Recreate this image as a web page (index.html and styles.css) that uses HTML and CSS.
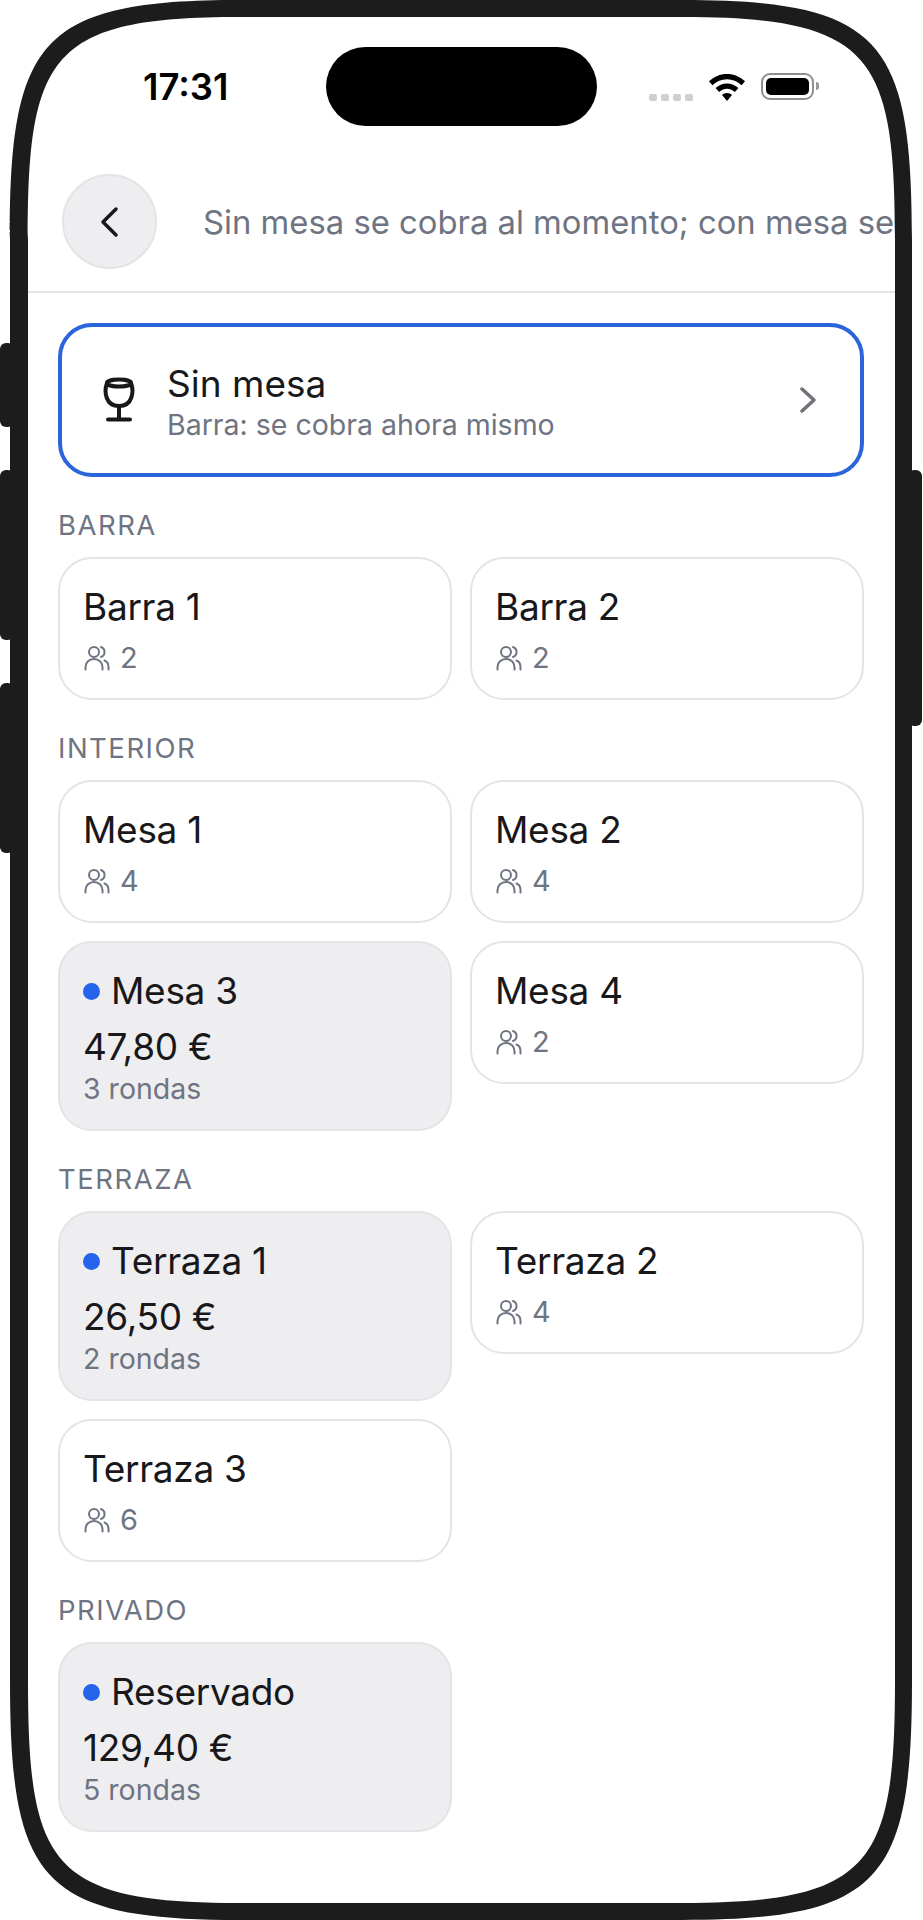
FILE: index.html
```html
<!DOCTYPE html>
<html lang="es">
<head>
    <meta charset="UTF-8">
    <meta name="viewport" content="width=device-width, initial-scale=1.0">
    <title>Mesas</title>
    <link rel="stylesheet" href="styles.css">
</head>
<body>
    <!-- Shared people icon -->
    <svg class="defs" width="0" height="0">
        <symbol id="people" viewBox="0 0 26 26">
            <circle cx="10" cy="7" r="5"/>
            <path d="M1.500 24.500v-2.500a8.500 8 0 0 1 17 0v2.500"/>
            <path d="M17 2a5.300 5.300 0 0 1 0 10"/>
            <path d="M20.500 15.500c2.500 1 4 3.500 4 6.500v2.500"/>
        </symbol>
    </svg>

    <div class="phone">
        <div class="screen">
            <!-- Status bar -->
            <div class="status">
                <span class="time">17:31</span>
                <div class="island"></div>
                <div class="dots"><i></i><i></i><i></i><i></i></div>
                <svg class="wifi" viewBox="0 0 36 27">
                    <path d="M18 0C11 0 5 2.700 0 7.300l3.400 4C7.500 7.500 12.500 5.300 18 5.300s10.500 2.200 14.600 6l3.400-4C31 2.700 25 0 18 0Z"/>
                    <path d="M18 9.500c-4.400 0-8.300 1.700-11.400 4.600l3.500 4c2.100-2 4.800-3.300 7.900-3.300s5.800 1.300 7.900 3.300l3.500-4C26.300 11.200 22.400 9.500 18 9.500Z"/>
                    <path d="M18 19c-2 0-3.800.8-5 2l5 6 5-6c-1.200-1.200-3-2-5-2Z"/>
                </svg>
                <div class="battery"><div class="battery-fill"></div></div>
                <div class="battery-nub"></div>
            </div>

            <!-- Header -->
            <header class="topbar">
                <button class="back">
                    <svg viewBox="0 0 24 32" width="24" height="32"><path d="M18 3 5 16l13 13"/></svg>
                </button>
                <p class="hint">Sin mesa se cobra al momento; con mesa se</p>
            </header>

            <main class="content">
                <div class="no-table">
                    <svg class="glass" viewBox="0 0 32 46">
                        <ellipse cx="16" cy="6" rx="12" ry="3.500"/>
                        <path d="M4 6C1 14 2 29 16 29S31 14 28 6"/>
                        <path d="M16 29v13M5 42.500h22"/>
                    </svg>
                    <div class="no-table-text">
                        <div class="no-table-title">Sin mesa</div>
                        <div class="no-table-sub">Barra: se cobra ahora mismo</div>
                    </div>
                    <svg class="arrow" viewBox="0 0 16 26" width="16" height="26"><path d="M2 2l12 11L2 24"/></svg>
                </div>

                <h2 class="zone">BARRA</h2>
                <div class="tables">
                    <div class="table">
                        <div class="table-name">Barra 1</div>
                        <div class="seats"><svg><use href="#people"/></svg>2</div>
                    </div>
                    <div class="table">
                        <div class="table-name">Barra 2</div>
                        <div class="seats"><svg><use href="#people"/></svg>2</div>
                    </div>
                </div>

                <h2 class="zone">INTERIOR</h2>
                <div class="tables">
                    <div class="table">
                        <div class="table-name">Mesa 1</div>
                        <div class="seats"><svg><use href="#people"/></svg>4</div>
                    </div>
                    <div class="table">
                        <div class="table-name">Mesa 2</div>
                        <div class="seats"><svg><use href="#people"/></svg>4</div>
                    </div>
                    <div class="table open">
                        <div class="table-name"><span class="dot"></span>Mesa 3</div>
                        <div class="amount">47,80 €</div>
                        <div class="rounds">3 rondas</div>
                    </div>
                    <div class="table">
                        <div class="table-name">Mesa 4</div>
                        <div class="seats"><svg><use href="#people"/></svg>2</div>
                    </div>
                </div>

                <h2 class="zone">TERRAZA</h2>
                <div class="tables">
                    <div class="table open">
                        <div class="table-name"><span class="dot"></span>Terraza 1</div>
                        <div class="amount">26,50 €</div>
                        <div class="rounds">2 rondas</div>
                    </div>
                    <div class="table">
                        <div class="table-name">Terraza 2</div>
                        <div class="seats"><svg><use href="#people"/></svg>4</div>
                    </div>
                    <div class="table">
                        <div class="table-name">Terraza 3</div>
                        <div class="seats"><svg><use href="#people"/></svg>6</div>
                    </div>
                </div>

                <h2 class="zone">PRIVADO</h2>
                <div class="tables">
                    <div class="table open">
                        <div class="table-name"><span class="dot"></span>Reservado</div>
                        <div class="amount">129,40 €</div>
                        <div class="rounds">5 rondas</div>
                    </div>
                </div>
            </main>
        </div>

        <!-- Device frame, drawn over the screen -->
        <svg class="frame" viewBox="0 0 923 1920" width="923" height="1920">
            <path fill-rule="evenodd" d="M10 240C10 40 40 0 240 0H682C882 0 912 40 912 240V1680C912 1880 882 1920 682 1920H240C40 1920 10 1880 10 1680Z
                M28 240V1680C28 1865 50 1903 240 1903H682C872 1903 895 1865 895 1680V240C895 55 872 17 682 17H240C50 17 28 55 28 240Z"/>
            <rect x="0" y="343" width="14" height="84" rx="6"/>
            <rect x="0" y="470" width="14" height="170" rx="6"/>
            <rect x="0" y="683" width="14" height="170" rx="6"/>
            <rect x="908" y="470" width="14" height="256" rx="6"/>
        </svg>
    </div>
</body>
</html>
```

FILE: styles.css
```css
/* Basic reset */
* {
    margin: 0;
    padding: 0;
    box-sizing: border-box;
}

body {
    width: 923px;
    height: 1920px;
    background-color: #fff;
    font-family: Inter, "Noto Sans", sans-serif;
    color: #18181b;
    overflow: hidden;
}

.defs {
    position: absolute;
}

/* Device */
.phone {
    position: relative;
    width: 923px;
    height: 1920px;
    padding: 17px 28px;
}

.frame {
    position: absolute;
    top: 0;
    left: 0;
    fill: #1c1c1c;
}

.screen {
    width: 867px;
    height: 1886px;
    overflow: hidden;
}

/* Status bar */
.status {
    height: 140px;
    padding-top: 30px;
    display: flex;
    align-items: flex-start;
}

.time {
    width: 298px;
    padding: 19px 0 0 115px;
    font-size: 36.500px;
    line-height: 42px;
    font-weight: 600;
    color: #000;
}

.island {
    width: 271px;
    height: 79px;
    border-radius: 40px;
    background-color: #000;
}

.dots {
    display: flex;
    gap: 4px;
    margin: 47px 0 0 52px;
}

.dots i {
    width: 8px;
    height: 7px;
    border-radius: 2px;
    background-color: #cfcfcf;
}

.wifi {
    width: 36px;
    height: 27px;
    margin: 27px 0 0 16px;
    fill: #000;
}

.battery {
    width: 53px;
    height: 27px;
    margin: 26px 0 0 16px;
    padding: 3px;
    border: 2px solid #8f8f8f;
    border-radius: 9px;
}

.battery-fill {
    height: 100%;
    border-radius: 5px;
    background-color: #000;
}

.battery-nub {
    width: 3px;
    height: 8px;
    margin: 35px 0 0 2px;
    border-radius: 0 3px 3px 0;
    background-color: #999;
}

/* Header */
.topbar {
    display: flex;
    align-items: center;
    gap: 46px;
    padding: 17px 0 22px 34px;
    border-bottom: 2px solid #e4e4e7;
}

.back {
    flex: none;
    width: 95px;
    height: 95px;
    display: flex;
    align-items: center;
    justify-content: center;
    border: 2px solid #e4e4e7;
    border-radius: 50%;
    background-color: #eeeef0;
}

.back svg {
    fill: none;
    stroke: #18181b;
    stroke-width: 3.500;
    stroke-linecap: round;
    stroke-linejoin: round;
}

.hint {
    font-size: 32.800px;
    color: #6f7482;
    white-space: nowrap;
}

/* Main content */
.content {
    padding: 30px 31px 0 30px;
}

.no-table {
    height: 154px;
    display: flex;
    align-items: center;
    padding: 0 41px;
    border: 4px solid #2a65dc;
    border-radius: 34px;
}

.glass {
    flex: none;
    width: 32px;
    height: 46px;
    margin-right: 32px;
    fill: none;
    stroke: #18181b;
    stroke-width: 4;
    stroke-linecap: round;
}

.no-table-text {
    flex: 1;
    padding-top: 3px;
}

.no-table-title {
    font-size: 37px;
    line-height: 44px;
}

.no-table-sub {
    margin-top: 2px;
    font-size: 28.500px;
    line-height: 34px;
    color: #6f7482;
}

.arrow {
    margin-right: 3px;
    fill: none;
    stroke: #71717a;
    stroke-width: 3.500;
    stroke-linecap: round;
    stroke-linejoin: round;
}

/* Zones and tables */
.zone {
    margin: 32px 0 16px;
    font-size: 27.500px;
    line-height: 32px;
    font-weight: 400;
    letter-spacing: 1.500px;
    color: #6f7482;
}

.tables {
    display: grid;
    grid-template-columns: 1fr 1fr;
    gap: 18px;
    align-items: start;
}

.table {
    min-height: 143px;
    padding: 26px 23px 0;
    border: 2px solid #e4e4e7;
    border-radius: 34px;
}

.table.open {
    height: 190px;
    background-color: #eeeef0;
}

.table-name {
    display: flex;
    align-items: center;
    font-size: 37px;
    line-height: 44px;
    letter-spacing: -0.3px;
}

.dot {
    width: 17px;
    height: 17px;
    margin-right: 11px;
    border-radius: 50%;
    background-color: #2563eb;
}

.seats {
    display: flex;
    align-items: center;
    gap: 10px;
    margin-top: 11px;
    font-size: 29px;
    line-height: 36px;
    color: #6f7482;
}

.seats svg {
    width: 26px;
    height: 26px;
    margin-left: 1px;
    fill: none;
    stroke: #6f7482;
    stroke-width: 2;
    stroke-linecap: round;
}

.amount {
    margin-top: 12px;
    font-size: 37px;
    line-height: 44px;
    letter-spacing: -0.3px;
}

.rounds {
    margin-top: 3px;
    font-size: 28.500px;
    line-height: 34px;
    color: #6f7482;
}
```
